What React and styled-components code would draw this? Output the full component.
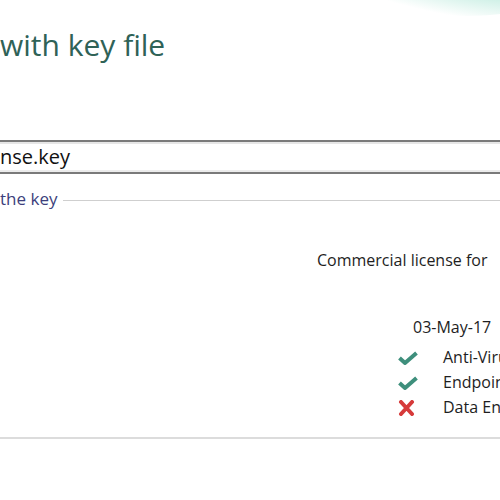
import styled, { createGlobalStyle } from 'styled-components'

const GlobalStyle = createGlobalStyle`
  html, body {
    margin: 0;
    padding: 0;
    background: #ffffff;
  }
  body {
    font-family: "Open Sans", "Liberation Sans", sans-serif;
  }
`

const features = [
  { name: 'Anti-Virus', ok: true },
  { name: 'Endpoint Control', ok: true },
  { name: 'Data Encryption', ok: false },
]

function CheckIcon() {
  return (
    <svg width="20" height="14" viewBox="0 0 20 14">
      <path d="M1.5 7 L7 12 L18.5 2" fill="none" stroke="#3e8f7c" strokeWidth="4" strokeLinejoin="round" />
    </svg>
  )
}

function CrossIcon() {
  return (
    <svg width="18" height="16" viewBox="0 0 18 16">
      <path d="M3 2 L14 14 M14 2 L3 14" fill="none" stroke="#d63a3a" strokeWidth="4" strokeLinecap="round" />
    </svg>
  )
}

function App() {
  return (
    <>
      <GlobalStyle />
      <Frame>
        <Swoosh />
        <Title>with key file</Title>
        <KeyField>nse.key</KeyField>
        <Legend>
          <LegendText>the key</LegendText>
          <LegendRule />
        </Legend>
        <Details>
          <LicenseType>Commercial license for</LicenseType>
          <Expiry>03-May-17</Expiry>
          <FeatureList>
            {features.map((f) => (
              <Feature key={f.name}>
                <IconCell>{f.ok ? <CheckIcon /> : <CrossIcon />}</IconCell>
                <FeatureName>{f.name}</FeatureName>
              </Feature>
            ))}
          </FeatureList>
        </Details>
        <Footer />
      </Frame>
    </>
  )
}

const Frame = styled.div`
  position: relative;
  width: 500px;
  height: 500px;
  overflow: hidden;
  background: #ffffff;
  display: flex;
  flex-direction: column;
`

const Swoosh = styled.div`
  position: absolute;
  top: -70px;
  right: -60px;
  width: 260px;
  height: 84px;
  border-radius: 50%;
  background: radial-gradient(ellipse at 80% 30%, #a9e3d3 0%, #c8eee3 40%, rgba(255,255,255,0) 72%);
  transform: rotate(6deg);
`

const Title = styled.h1`
  margin: 24px 0 0 0;
  font-weight: 400;
  font-size: 30px;
  line-height: 42px;
  color: #2f6257;
  white-space: nowrap;
`

const KeyField = styled.div`
  margin-top: 74px;
  height: 30px;
  border-top: 2px solid #7a7a7a;
  border-bottom: 2px solid #7a7a7a;
  box-shadow: inset 0 2px 0 #e6e6e6, inset 0 -2px 0 #ececec;
  font-size: 20px;
  line-height: 30px;
  color: #111111;
  white-space: nowrap;
`

const Legend = styled.div`
  margin-top: 12px;
  display: flex;
  align-items: center;
  gap: 6px;
`

const LegendText = styled.span`
  font-size: 17px;
  line-height: 26px;
  color: #3d3f7c;
  white-space: nowrap;
`

const LegendRule = styled.div`
  flex: 1;
  height: 1px;
  background: #cfcfcf;
  margin-top: 2px;
`

const Details = styled.div`
  padding-left: 317px;
  display: flex;
  flex-direction: column;
  white-space: nowrap;
  color: #1e1e1e;
  font-size: 16px;
`

const LicenseType = styled.div`
  margin-top: 35px;
  line-height: 26px;
`

const Expiry = styled.div`
  margin-top: 41px;
  padding-left: 96px;
  line-height: 26px;
`

const FeatureList = styled.div`
  margin-top: 5px;
  padding-left: 81px;
  display: flex;
  flex-direction: column;
`

const Feature = styled.div`
  display: flex;
  align-items: center;
  height: 25px;
`

const IconCell = styled.span`
  flex: none;
  width: 45px;
  display: flex;
  align-items: center;
`

const FeatureName = styled.span`
  line-height: 25px;
`

const Footer = styled.div`
  margin-top: 17px;
  height: 2px;
  background: #dcdcdc;
`

export default App
